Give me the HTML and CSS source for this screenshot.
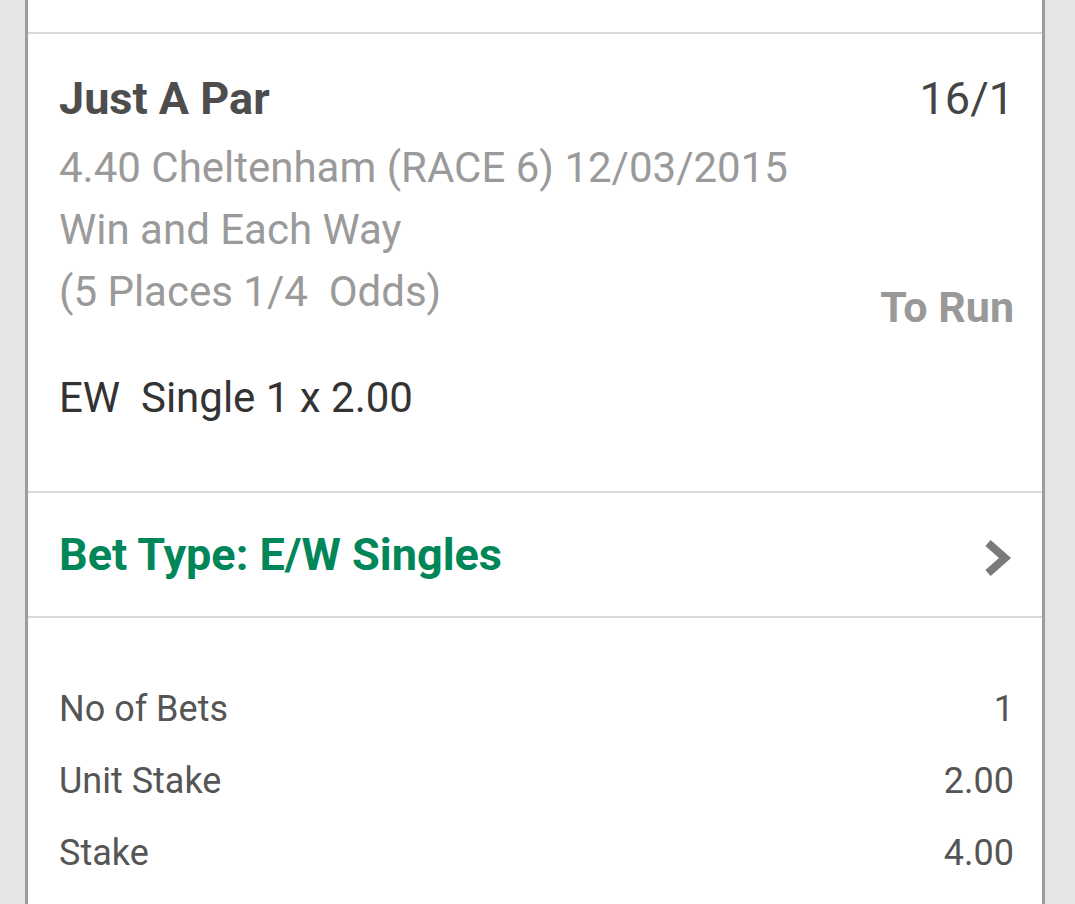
FILE: index.html
```html
<!DOCTYPE html>
<html lang="en">
<head>
    <meta charset="UTF-8">
    <meta name="viewport" content="width=device-width, initial-scale=1.0">
    <title>Bet Receipt</title>
    <link rel="stylesheet" href="styles.css">
</head>
<body>
    <div class="slip">
        <div class="slip-top"></div>

        <div class="selection">
            <div class="selection-head">
                <span class="runner">Just A Par</span>
                <span class="price">16/1</span>
            </div>
            <div class="selection-body">
                <div class="details">
                    <div>4.40 Cheltenham (RACE 6) 12/03/2015</div>
                    <div>Win and Each Way</div>
                    <div>(5 Places 1/4&nbsp; Odds)</div>
                </div>
                <div class="status">To Run</div>
            </div>
            <div class="bet-line">EW&nbsp; Single 1 x 2.00</div>
        </div>

        <div class="bet-type">
            <span>Bet Type: E/W Singles</span>
            <svg class="chevron" width="32" height="44" viewBox="0 0 32 44">
                <polyline points="8,7 25,22 8,37" fill="none" stroke="#7a7a7a" stroke-width="8" stroke-linejoin="miter"/>
            </svg>
        </div>

        <div class="summary">
            <div class="summary-row"><span>No of Bets</span><span>1</span></div>
            <div class="summary-row"><span>Unit Stake</span><span>2.00</span></div>
            <div class="summary-row"><span>Stake</span><span>4.00</span></div>
        </div>
    </div>
</body>
</html>
```

FILE: styles.css
```css
body {
    margin: 0;
    background-color: #e5e5e5;
    font-family: Roboto, "Noto Sans", Arial, sans-serif;
}
.slip {
    margin: 0 30px 0 25px;
    min-height: 904px;
    background-color: white;
    border-left: 3px solid #9c9c9c;
    border-right: 3px solid #9c9c9c;
}
.slip-top {
    height: 32px;
    border-bottom: 2px solid #d9d9d9;
}
.selection {
    padding: 34px 28px 62px 31px;
    border-bottom: 2px solid #d9d9d9;
}
.selection-head {
    display: flex;
    justify-content: space-between;
    font-size: 45px;
    line-height: 62px;
}
.runner {
    font-weight: bold;
    color: #4d4d4d;
}
.price {
    color: #444;
}
.selection-body {
    display: flex;
    justify-content: space-between;
    align-items: flex-end;
    margin-top: 7px;
}
.details {
    font-size: 42px;
    line-height: 62px;
    color: #9a9a9a;
}
.status {
    font-size: 43px;
    line-height: 62px;
    font-weight: bold;
    color: #999;
    margin-bottom: -15px;
}
.bet-line {
    margin-top: 44px;
    font-size: 42px;
    line-height: 62px;
    color: #333;
}
.bet-type {
    display: flex;
    justify-content: space-between;
    align-items: center;
    height: 123px;
    padding: 0 30px 0 31px;
    border-bottom: 2px solid #d9d9d9;
    font-size: 45px;
    font-weight: bold;
    color: #008659;
}
.chevron {
    margin-top: 6px;
}
.summary {
    padding: 55px 28px 0 31px;
}
.summary-row {
    display: flex;
    justify-content: space-between;
    font-size: 36px;
    line-height: 72px;
    color: #555;
}
```
